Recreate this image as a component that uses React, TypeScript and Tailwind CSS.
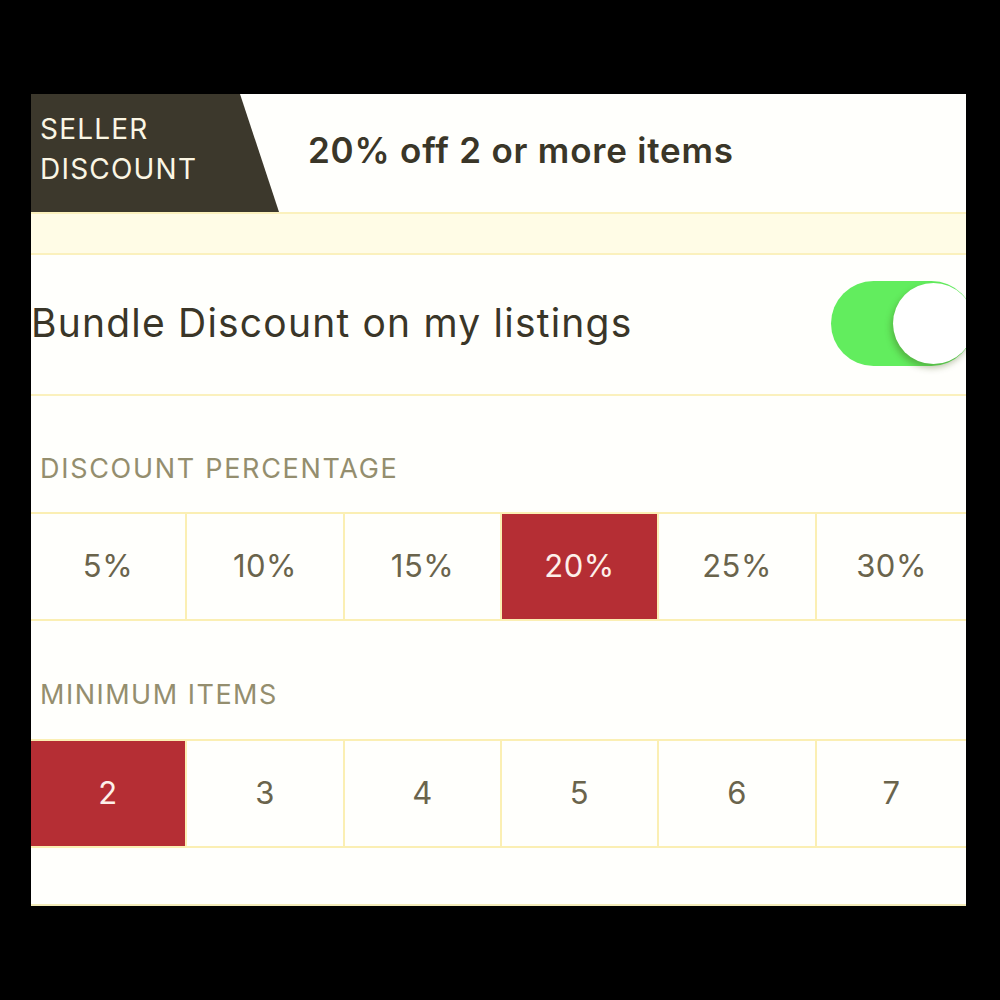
import React from "react";

const font = { fontFamily: "Inter, 'Open Sans', sans-serif" };

function Grid({ items, selected }: { items: string[]; selected: string }) {
  return (
    <div className="grid grid-cols-[154px_158px_157px_157px_158px_151px] h-[109px] border-y-2 border-[#fbefb3]">
      {items.map((it, i) => (
        <div
          key={it}
          className={
            "flex items-center justify-center text-[31px] tracking-[0.5px] " +
            (i > 0 ? "border-l-2 border-[#fbefb3] " : "") +
            (it === selected ? "bg-[#b52e34] text-[#fdf0ea]" : "text-[#6a644c]")
          }
        >
          {it}
        </div>
      ))}
    </div>
  );
}

export default function App() {
  return (
    <div className="w-[1000px] h-[1000px] bg-black pt-[94px] pl-[31px]" style={font}>
      <div className="w-[935px] h-[812px] bg-[#fffffc] overflow-hidden flex flex-col border-b-2 border-[#f3ecb8]">
        <div className="h-[118px] flex items-center shrink-0">
          <div className="w-[248px] h-full bg-[#3c382c] [clip-path:polygon(0_0,209px_0,248px_100%,0_100%)] flex flex-col justify-center pl-[9px] text-[28px] tracking-[1.2px] leading-[40px] text-[#fbf6e4] pb-[8px]">
            <div>SELLER</div>
            <div>DISCOUNT</div>
          </div>
          <div className="ml-[29px] text-[35px] tracking-[0.8px] font-semibold text-[#3a3628] pb-[5px]">20% off 2 or more items</div>
        </div>
        <div className="h-[43px] shrink-0 bg-[#fffce6] border-y-2 border-[#fbf1bd]"></div>
        <div className="h-[141px] shrink-0 flex items-center border-b-2 border-[#fbf1bd]">
          <div className="text-[39px] tracking-[1.2px] text-[#3a3628] pb-[2px]">Bundle Discount on my listings</div>
          <div className="ml-auto -mr-[8px] relative w-[143px] h-[85px] rounded-full bg-[#62ed5e] mb-[3px]">
            <div className="absolute right-[0px] top-[2px] w-[81px] h-[81px] rounded-full bg-white shadow-[-2px_4px_6px_rgba(60,80,20,0.35)]"></div>
          </div>
        </div>
        <div className="h-[116px] shrink-0 flex items-end pl-[9px] pb-[23px] text-[27px] tracking-[1.7px] text-[#948e6e]">DISCOUNT PERCENTAGE</div>
        <Grid items={["5%", "10%", "15%", "20%", "25%", "30%"]} selected="20%" />
        <div className="h-[118px] shrink-0 flex items-end pl-[9px] pb-[24px] text-[27px] tracking-[1.5px] text-[#948e6e]">MINIMUM ITEMS</div>
        <Grid items={["2", "3", "4", "5", "6", "7"]} selected="2" />
      </div>
    </div>
  );
}
